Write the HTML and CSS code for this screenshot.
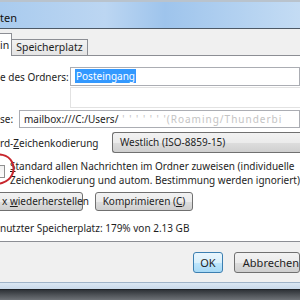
FILE: index.html
```html
<!DOCTYPE html>
<html lang="de">
<head>
    <meta charset="UTF-8">
    <title>Ordner-Eigenschaften</title>
    <link rel="stylesheet" href="styles.css">
</head>
<body>
    <div class="screen">
        <!-- Fensterrahmen oben -->
        <div class="titlebar"><span>ten</span></div>

        <div class="dialog">
            <div class="tabs">
                <div class="tab active">in</div>
                <div class="tab">Speicherplatz</div>
            </div>

            <div class="panel">
                <div class="row name-row">
                    <label>e des Ordners:</label>
                    <div class="field"><span class="selected">Posteingang</span></div>
                </div>
                <div class="ghost-field"></div>
                <div class="row addr-row">
                    <label>se:</label>
                    <div class="field">mailbox:///C:/Users/<span class="hidden-path">'  ' ' ' ' ' '(Roaming/Thunderbi</span></div>
                </div>
                <div class="row enc-row">
                    <label>rd-<u>Z</u>eichenkodierung</label>
                    <div class="select">Westlich (ISO-8859-15)</div>
                </div>
                <div class="check-row">
                    <span class="checkbox"></span>
                    <p><u>S</u>tandard allen Nachrichten im Ordner zuweisen (individuelle<br>Zeichenkodierung und autom. Bestimmung werden ignoriert)</p>
                    <!-- roter Kreis, von Hand gezeichnet -->
                    <svg class="marker" width="40" height="40" viewBox="0 0 40 40">
                        <path d="M2 4 C10 1, 20 2, 24 10 C28 18, 24 28, 14 31 C8 33, 3 32, 0 31" fill="none" stroke="#c8262d" stroke-width="2"/>
                    </svg>
                </div>
                <div class="btn-row">
                    <button class="btn rebuild">x <u>w</u>iederherstellen</button>
                    <button class="btn compact">Komprimieren (<u>C</u>)</button>
                </div>
                <div class="usage">nutzter Speicherplatz: 179% von 2.13 GB</div>
            </div>

            <div class="footer">
                <button class="btn ok">OK</button>
                <button class="btn cancel">Abbrechen</button>
            </div>
        </div>

        <div class="window-edge"></div>
        <div class="taskbar"><span>15. Februar 2010</span></div>
    </div>
</body>
</html>
```

FILE: styles.css
```css
/* Style global */
body {
    margin: 0;
    padding: 0;
    font-family: "Noto Sans", "Open Sans", sans-serif;
    font-size: 10px;
    color: #1e1e1e;
}

.screen {
    width: 300px;
    height: 300px;
    overflow: hidden;
    background-color: #f0f0f0;
}

.titlebar {
    height: 26px;
    border-top: 2px solid #b9c3cd;
    border-bottom: 1px solid #4d5966;
    background: linear-gradient(90deg, #a9cbee 0%, #bcd6f2 35%, #9ec4ec 55%, #c4dcf4 100%);
    font-size: 11px;
    line-height: 26px;
    color: #111;
}

.titlebar span {
    position: relative;
    top: 3px;
}

.dialog {
    background-color: #f0f0f0;
}

.tabs {
    display: flex;
    align-items: flex-end;
    height: 26px;
}

.tab {
    height: 15px;
    padding: 0 4px;
    border: 1px solid #8c8e94;
    border-bottom: none;
    background: linear-gradient(#f2f2f2, #e4e4e4);
    font-size: 10.5px;
    line-height: 15px;
    margin-left: -1px;
}

.tab.active {
    height: 22px;
    margin-bottom: -1px;
    padding: 0 2px 0 0;
    background: #fff;
    line-height: 22px;
    position: relative;
    z-index: 1;
}

.panel {
    height: 187px;
    background-color: #fff;
    border-top: 1px solid #8c8e94;
    border-bottom: 1px solid #8c8e94;
    box-sizing: border-box;
    padding-top: 11px;
    position: relative;
}

.row {
    display: flex;
    align-items: center;
    white-space: nowrap;
}

.field {
    flex: 1;
    height: 19px;
    border: 1px solid #abadb3;
    box-sizing: border-box;
    padding-left: 4px;
    line-height: 17px;
    overflow: hidden;
    background: #fff;
}

.name-row label {
    width: 70px;
}

.selected {
    background-color: #3399ff;
    color: #fff;
    padding: 0 1px;
}

.ghost-field {
    margin: 1px 0 0 70px;
    height: 19px;
    border: 1px solid #e2e2e2;
    border-right: none;
}

.addr-row {
    margin-top: 2px;
}

.addr-row label {
    width: 19px;
}

.addr-row .field {
    height: 18px;
    line-height: 16px;
}

.hidden-path {
    color: #c4c4c4;
    letter-spacing: 1px;
    padding-left: 4px;
}

.enc-row {
    margin-top: 4px;
}

.enc-row label {
    width: 112px;
}

.select {
    flex: 1;
    height: 21px;
    box-sizing: border-box;
    border: 1px solid #707070;
    border-right: none;
    border-radius: 3px 0 0 3px;
    padding-left: 7px;
    line-height: 19px;
    background: linear-gradient(#f2f2f2 0%, #ebebeb 50%, #dddddd 51%, #cfcfcf 100%);
}

.check-row {
    position: relative;
    margin-top: 6px;
    height: 28px;
}

.checkbox {
    position: absolute;
    left: -8px;
    top: 6px;
    width: 11px;
    height: 11px;
    border: 1px solid #8f8f8f;
    background: linear-gradient(#f0f0f0, #fdfdfd);
}

.check-row p {
    margin: 0 0 0 10px;
    line-height: 14px;
    white-space: nowrap;
}

.marker {
    position: absolute;
    left: -12px;
    top: -7px;
}

.btn-row {
    display: flex;
    margin-top: 5px;
}

.btn {
    height: 19px;
    box-sizing: border-box;
    border: 1px solid #707070;
    border-radius: 3px;
    background: linear-gradient(#f2f2f2 0%, #ebebeb 50%, #dddddd 51%, #cfcfcf 100%);
    font-family: inherit;
    font-size: 10px;
    color: #1e1e1e;
    padding: 0;
    line-height: 17px;
    white-space: nowrap;
}

.rebuild {
    width: 103px;
    margin-left: -20px;
    text-align: left;
    padding-left: 21px;
}

.compact {
    width: 98px;
    margin-left: 12px;
}

.usage {
    margin-top: 10px;
    line-height: 14px;
}

.footer {
    display: flex;
    height: 40px;
    padding-top: 10px;
    box-sizing: border-box;
    padding-left: 193px;
}

.footer .btn {
    height: 21px;
    line-height: 19px;
    font-size: 11px;
}

.ok {
    width: 64px;
    border-color: #3c7fb1;
    background: linear-gradient(#eaf6fd 0%, #d9f0fc 50%, #bee6fd 51%, #a7d9f5 100%);
}

.cancel {
    width: 75px;
    margin-left: 11px;
    text-align: left;
    padding-left: 8px;
}

.window-edge {
    height: 6px;
    border-top: 1px solid #9fb3c8;
    background: linear-gradient(#dbe7f3, #c9d9ea);
}

.taskbar {
    height: 10px;
    background: linear-gradient(#2f3338, #6e7277);
    border-top: 1px solid #1f2226;
    color: #fff;
    font-size: 12px;
    font-weight: bold;
    line-height: 10px;
    padding-left: 14px;
    overflow: hidden;
}

.taskbar span {
    position: relative;
    top: 11px;
}
```
